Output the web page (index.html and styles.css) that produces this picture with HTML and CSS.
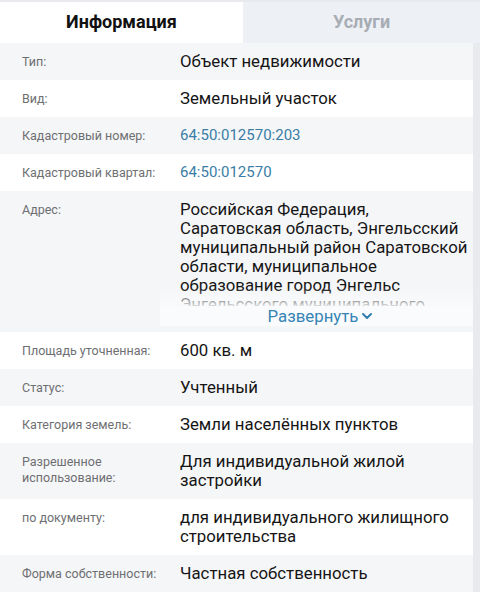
FILE: index.html
```html
<!DOCTYPE html>
<html lang="ru">
<head>
<meta charset="utf-8">
<link rel="stylesheet" href="styles.css">
</head>
<body>
<div class="page">
  <div class="tabs">
    <div class="tab active">Информация</div>
    <div class="tab">Услуги</div>
  </div>
  <div class="body">
    <div class="rows">
      <div class="row alt"><div class="label">Тип:</div><div class="value">Объект недвижимости</div></div>
      <div class="row"><div class="label">Вид:</div><div class="value">Земельный участок</div></div>
      <div class="row alt"><div class="label">Кадастровый номер:</div><div class="value link">64:50:012570:203</div></div>
      <div class="row"><div class="label">Кадастровый квартал:</div><div class="value link">64:50:012570</div></div>
      <div class="row alt addr">
        <div class="label">Адрес:</div>
        <div class="addr-col">
          <div class="value clip">Российская Федерация, Саратовская область, Энгельсский муниципальный район Саратовской области, муниципальное образование город Энгельс Энгельсского муниципального района Саратовской области, город Энгельс</div>
          <div class="more">Развернуть <svg width="12" height="8" viewBox="0 0 12 8"><path d="M2 2 L6 6 L10 2" fill="none" stroke="#2f7fb0" stroke-width="2" stroke-linecap="round" stroke-linejoin="round"/></svg></div>
        </div>
      </div>
      <div class="row"><div class="label">Площадь уточненная:</div><div class="value">600 кв. м</div></div>
      <div class="row alt"><div class="label">Статус:</div><div class="value">Учтенный</div></div>
      <div class="row"><div class="label">Категория земель:</div><div class="value">Земли населённых пунктов</div></div>
      <div class="row alt"><div class="label">Разрешенное использование:</div><div class="value">Для индивидуальной жилой застройки</div></div>
      <div class="row"><div class="label">по документу:</div><div class="value">для индивидуального жилищного строительства</div></div>
      <div class="row alt"><div class="label">Форма собственности:</div><div class="value">Частная собственность</div></div>
    </div>
    <div class="scroll"></div>
  </div>
</div>
</body>
</html>
```

FILE: styles.css
```css
* { box-sizing: border-box; }
html, body { margin: 0; padding: 0; background: #fff; }
body { font-family: Roboto, "Noto Sans", sans-serif; width: 480px; height: 602px; overflow: hidden; }
.page { border-top: 2px solid #e9eaee; }
.tabs { display: flex; height: 41px; }
.tab { flex: 1; display: flex; align-items: center; justify-content: center; font-weight: 700; font-size: 18px; color: #a8adb4; background: #edf1f6; padding-bottom: 2px; }
.tab.active { color: #111; background: #fff; flex: 0 0 243px; }
.body { display: flex; }
.rows { flex: 1; }
.scroll { width: 7px; background: #e9eaed; }
.row { display: flex; padding: 9px 0 9px 22px; background: #fff; min-height: 37px; }
.row.alt { background: #f5f6f8; }
.label { width: 158px; flex: none; font-size: 12.5px; color: #6e6f72; line-height: 16px; padding-top: 2px; padding-right: 8px; }
.value { flex: 1; font-size: 16.8px; line-height: 19px; color: #151515; padding-right: 2px; }
.value.link { color: #3a7da6; font-size: 15px; }
.addr { padding-bottom: 6px; }
.addr-col { flex: 1; position: relative; }
.clip { max-height: 106px; overflow: hidden; }
.addr-col::after { content: ""; position: absolute; left: -20px; right: 0; top: 88px; height: 20px; background: linear-gradient(rgba(250,251,252,0), rgba(250,251,252,0.95)); }
.more { height: 20px; display: flex; align-items: center; justify-content: center; gap: 3px; margin-left: -20px; font-size: 16.8px; color: #3584b5; background: #fafbfc; position: relative; z-index: 1; padding-left: 8px; }
```
